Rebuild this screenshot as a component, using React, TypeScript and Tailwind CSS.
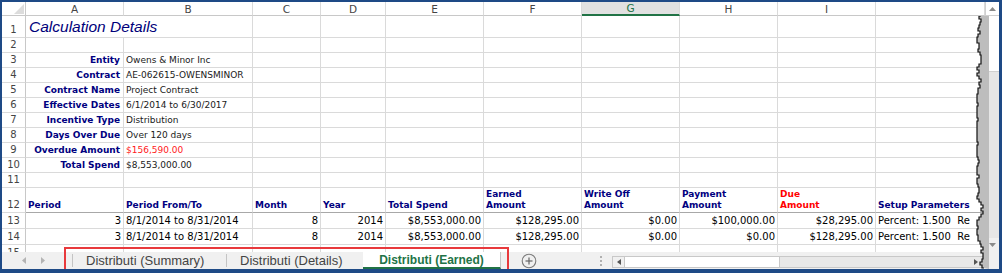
import React from "react";

const DV = "font-['DejaVu_Sans',Verdana,sans-serif]";
const LS = "font-['Liberation_Sans',Arial,sans-serif]";
const COLS =
  "grid grid-cols-[24px_98px_129px_68px_65px_98px_98px_98px_98px_98px_1fr]";

type CellSpec = {
  text?: React.ReactNode;
  right?: boolean;
  cls?: string;
  span?: number;
};

const LABEL = `${DV} text-[9px] leading-[11px] font-bold text-[#000080] pb-[1px]`;
const VALUE = `${DV} text-[9px] leading-[11px] text-[#1a1a1a] pb-[1px]`;
const HEAD = `${DV} text-[9px] leading-[11px] font-bold text-[#000080] pb-[1px]`;
const DATA = `${DV} text-[10px] leading-[13px] text-black pb-[1px]`;

function Row({
  h,
  n,
  cells,
  labelCls = "items-end pb-[1px]",
  bottom = "border-b-[#dadada]",
}: {
  h: string;
  n: string;
  cells: CellSpec[];
  labelCls?: string;
  bottom?: string;
}) {
  return (
    <div className={`${COLS} ${h} shrink-0`}>
      <div
        className={`flex justify-center ${labelCls} border-r border-b border-r-[#c8c8c8] border-b-[#dadada] ${DV} text-[10px] leading-[12px] text-[#444]`}
      >
        {n}
      </div>
      {cells.map((c, i) => (
        <div
          key={i}
          className={`flex items-end overflow-hidden whitespace-nowrap border-r border-b border-r-[#dadada] ${bottom} ${
            c.right ? "justify-end pr-[2px]" : "pl-[2px]"
          } ${c.span === 2 ? "col-span-2" : ""} ${c.cls ?? ""}`}
        >
          {c.text}
        </div>
      ))}
    </div>
  );
}

const empty = (k: number): CellSpec[] => Array.from({ length: k }, () => ({}));

const details: [string, string, boolean?][] = [
  ["Entity", "Owens & Minor Inc"],
  ["Contract", "AE-062615-OWENSMINOR"],
  ["Contract Name", "Project Contract"],
  ["Effective Dates", "6/1/2014 to 6/30/2017"],
  ["Incentive Type", "Distribution"],
  ["Days Over Due", "Over 120 days"],
  ["Overdue Amount", "$156,590.00", true],
  ["Total Spend", "$8,553,000.00"],
];

const tornPts = (() => {
  const pts: string[] = [];
  let s = 12345;
  let x = 6;
  for (let y = 0; y <= 253; y += 3) {
    s = (s * 16807) % 2147483647;
    const r = s % 5;
    pts.push(`${x},${y}`);
    x = Math.max(2, Math.min(9, x + r - 2));
    pts.push(`${x},${y}`);
  }
  return pts;
})();

function ColHeader() {
  const letters = ["A", "B", "C", "D", "E", "F", "G", "H", "I", ""];
  return (
    <div className={`${COLS} h-[14px] shrink-0`}>
      <div className="flex items-end justify-end border-r border-b border-r-[#c8c8c8] border-b-[#c8c8c8] pr-[1px] pb-[1px]">
        <svg width="10" height="10" viewBox="0 0 10 10">
          <polygon points="10,0 10,10 0,10" fill="#dcdcdc" />
        </svg>
      </div>
      {letters.map((l, i) =>
        l === "G" ? (
          <div
            key={i}
            className={`flex items-center justify-center bg-[#e1e1e1] border-r border-r-[#dadada] border-b-2 border-b-[#217346] ${DV} text-[10.5px] leading-[12px] text-[#217346]`}
          >
            {l}
          </div>
        ) : (
          <div
            key={i}
            className={`flex items-center justify-center border-r border-b border-r-[#dadada] border-b-[#c8c8c8] ${DV} text-[10.5px] leading-[12px] text-[#444]`}
          >
            {l}
          </div>
        )
      )}
    </div>
  );
}

function VScroll() {
  return (
    <div className="w-[14px] flex flex-col bg-[#e6e6e6] border-l border-[#d0d0d0]">
      <div className="h-[14px] bg-white border-b border-[#d0d0d0] flex items-center justify-center">
        <svg width="7" height="4" viewBox="0 0 7 4">
          <polygon points="0,4 7,4 3.5,0" fill="#8a8a8a" />
        </svg>
      </div>
      <div className="h-[56px] bg-white border-b border-[#d0d0d0]" />
      <div className="flex-1" />
      <div className="h-[14px] bg-[#f0f0f0] flex items-center justify-center">
        <svg width="7" height="4" viewBox="0 0 7 4">
          <polygon points="0,0 7,0 3.5,4" fill="#8a8a8a" />
        </svg>
      </div>
    </div>
  );
}

function Sep() {
  return <div className="w-px h-[13px] self-center bg-[#c4c4c4]" />;
}

function TabBar() {
  return (
    <div className={`h-[17px] flex bg-[#f0f0f0] ${LS} shrink-0`}>
      <div className="w-[70px] flex items-center pl-[20px] gap-[15px]">
        <svg width="4" height="7" viewBox="0 0 4 7">
          <polygon points="4,0 4,7 0,3.5" fill="#b4b4b4" />
        </svg>
        <svg width="4" height="7" viewBox="0 0 4 7">
          <polygon points="0,0 0,7 4,3.5" fill="#b4b4b4" />
        </svg>
      </div>
      <Sep />
      <div className="w-[153px] flex items-center pl-[13px] text-[13px] leading-[15px] text-[#444] whitespace-nowrap">
        Distributi (Summary)
      </div>
      <Sep />
      <div className="w-[136px] flex items-center pl-[13px] text-[13px] leading-[15px] text-[#444] whitespace-nowrap">
        Distributi (Details)
      </div>
      <div className="w-[138px] bg-white border-r border-r-[#c4c4c4] border-b-2 border-b-[#217346] flex items-center justify-center text-[12px] leading-[14px] font-bold text-[#217346] whitespace-nowrap">
        Distributi (Earned)
      </div>
      <div className="ml-[20px] w-[16px] flex items-center justify-center">
        <svg width="16" height="16" viewBox="0 0 16 16">
          <circle cx="8" cy="8" r="6.8" fill="none" stroke="#7a7a7a" strokeWidth="1.1" />
          <line x1="4.5" y1="8" x2="11.5" y2="8" stroke="#666" strokeWidth="1.2" />
          <line x1="8" y1="4.5" x2="8" y2="11.5" stroke="#666" strokeWidth="1.2" />
        </svg>
      </div>
      <div className="ml-[62px] w-[3px] flex flex-col items-center justify-center gap-[2px]">
        <div className="w-[2px] h-[2px] bg-[#b0b0b0]" />
        <div className="w-[2px] h-[2px] bg-[#b0b0b0]" />
        <div className="w-[2px] h-[2px] bg-[#b0b0b0]" />
      </div>
      <div className="ml-[10px] w-[373px] h-[12px] self-end mb-[1px] flex border border-[#c8c8c8] bg-[#e8e8e8]">
        <div className="w-[12px] bg-[#f0f0f0] border-r border-[#c8c8c8] flex items-center justify-center">
          <svg width="4" height="6" viewBox="0 0 4 6">
            <polygon points="4,0 4,6 0,3" fill="#555" />
          </svg>
        </div>
        <div className="w-[155px] bg-white border-r border-[#c8c8c8]" />
        <div className="flex-1" />
        <div className="w-[16px] flex items-center justify-center">
          <svg width="4" height="6" viewBox="0 0 4 6">
            <polygon points="0,0 0,6 4,3" fill="#555" />
          </svg>
        </div>
      </div>
      <div className="w-[14px] bg-[#f0f0f0]" />
    </div>
  );
}

export default function App() {
  return (
    <div className="relative w-[1002px] h-[273px] overflow-hidden bg-white border-l-2 border-t-2 border-r-[3px] border-b-4 border-[#1e4a86] flex flex-col">
      <div className="flex h-[250px] shrink-0">
        <div className="w-[983px] flex flex-col overflow-hidden">
          <ColHeader />
          <Row
            h="h-[22px]"
            n="1"
            cells={[
              {
                span: 2,
                text: "Calculation Details",
                cls: `pl-[3px] ${LS} italic text-[15.5px] leading-[18px] text-[#00007a] pb-[1px] overflow-visible`,
              },
              ...empty(8),
            ]}
          />
          <Row h="h-[15px]" n="2" cells={empty(10)} />
          {details.map(([l, v, red], i) => (
            <Row
              key={l}
              h="h-[15px]"
              n={String(i + 3)}
              cells={[
                { right: true, text: l, cls: `${LABEL} pr-[3px]` },
                {
                  text: v,
                  cls: `${VALUE} pl-[1px] ${red ? "text-[#ff1a1a]" : ""}`,
                },
                ...empty(8),
              ]}
            />
          ))}
          <Row h="h-[15px]" n="11" cells={empty(10)} />
          <Row
            h="h-[25px]"
            n="12"
            bottom="border-b-[#a8a8a8]"
            cells={[
              { text: "Period", cls: HEAD },
              { text: "Period From/To", cls: `${HEAD} pl-[1px]` },
              { text: "Month", cls: HEAD },
              { text: "Year", cls: `${HEAD} pl-[1px]` },
              { text: "Total Spend", cls: HEAD },
              {
                text: (
                  <span>
                    Earned
                    <br />
                    Amount
                  </span>
                ),
                cls: HEAD,
              },
              {
                text: (
                  <span>
                    Write Off
                    <br />
                    Amount
                  </span>
                ),
                cls: HEAD,
              },
              {
                text: (
                  <span>
                    Payment
                    <br />
                    Amount
                  </span>
                ),
                cls: HEAD,
              },
              {
                text: (
                  <span>
                    Due
                    <br />
                    Amount
                  </span>
                ),
                cls: `${HEAD} text-[#ff0000]`,
              },
              { text: "Setup Parameters", cls: HEAD },
            ]}
          />
          {[
            ["$100,000.00", "$28,295.00"],
            ["$0.00", "$128,295.00"],
          ].map(([pay, due], i) => (
            <Row
              key={i}
              h="h-[16px]"
              n={String(13 + i)}
              cells={[
                { right: true, text: "3", cls: `${DATA} pr-[1px]` },
                { text: "8/1/2014 to 8/31/2014", cls: `${DATA} pl-[1px]` },
                { right: true, text: "8", cls: DATA },
                { right: true, text: "2014", cls: DATA },
                { right: true, text: "$8,553,000.00", cls: DATA },
                { right: true, text: "$128,295.00", cls: DATA },
                { right: true, text: "$0.00", cls: DATA },
                { right: true, text: pay, cls: DATA },
                { right: true, text: due, cls: DATA },
                {
                  text: "Percent:\u00a01.500\u00a0\u00a0Re",
                  cls: `${DATA} pl-[1px]`,
                },
              ]}
            />
          ))}
          <Row
            h="h-[15px]"
            n="15"
            labelCls="items-start pt-[2px]"
            cells={empty(10)}
          />
        </div>
        <VScroll />
      </div>
      <TabBar />

      <svg
        className="absolute left-[973px] top-[14px]"
        width="14"
        height="253"
        viewBox="0 0 14 253"
      >
        <polygon
          points={`${tornPts.join(" ")} 14,253 14,0`}
          fill="#bdbdbd"
        />
        <polyline
          points={tornPts.join(" ")}
          fill="none"
          stroke="#111"
          strokeWidth="1.2"
        />
      </svg>

      <div className="absolute left-[62px] top-[245px] w-[445px] h-[24px] border-2 border-[#e8393c]" />
    </div>
  );
}
